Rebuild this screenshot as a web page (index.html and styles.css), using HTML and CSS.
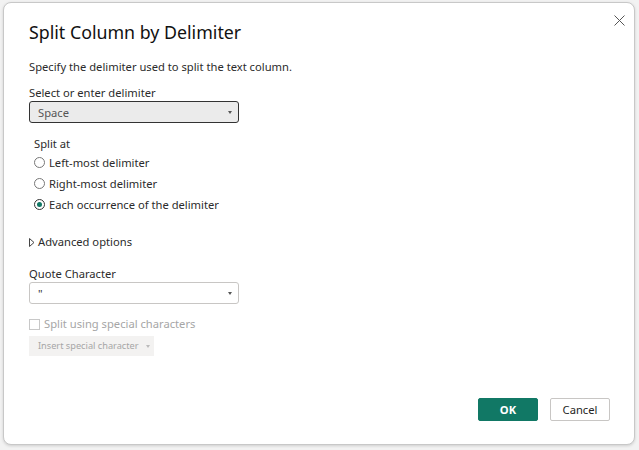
FILE: index.html
```html
<!DOCTYPE html>
<html lang="en">
<head>
    <meta charset="UTF-8">
    <title>Split Column by Delimiter</title>
    <link rel="stylesheet" href="styles.css">
</head>
<body>
    <div class="dialog">
        <button class="close" aria-label="Close">
            <svg width="11" height="11" viewBox="0 0 11 11"><path d="M0.5 0.5 L10.5 10.5 M10.5 0.5 L0.5 10.5" stroke="#555" stroke-width="1"/></svg>
        </button>
        <h1>Split Column by Delimiter</h1>
        <p class="desc">Specify the delimiter used to split the text column.</p>

        <div class="field">
            <label>Select or enter delimiter</label>
            <div class="select active">
                <span>Space</span>
                <span class="caret"></span>
            </div>
        </div>

        <div class="group">
            <div class="group-title">Split at</div>
            <label class="radio"><span class="dot"></span>Left-most delimiter</label>
            <label class="radio"><span class="dot"></span>Right-most delimiter</label>
            <label class="radio"><span class="dot checked"></span>Each occurrence of the delimiter</label>
        </div>

        <div class="advanced">
            <svg width="6" height="9" viewBox="0 0 6 9"><path d="M0.5 0.5 L5 4.5 L0.5 8.5 Z" fill="none" stroke="#444" stroke-width="1"/></svg>
            <span>Advanced options</span>
        </div>

        <div class="field">
            <label>Quote Character</label>
            <div class="select">
                <span>"</span>
                <span class="caret"></span>
            </div>
        </div>

        <label class="check"><span class="box"></span>Split using special characters</label>
        <div class="insert">Insert special character <span class="caret light"></span></div>

        <div class="footer">
            <button class="btn primary">OK</button>
            <button class="btn">Cancel</button>
        </div>
    </div>
</body>
</html>
```

FILE: styles.css
```css
body {
    margin: 0;
    padding: 2px 4px 3px 3px;
    background-color: #f2f2f2;
    font-family: "Segoe UI", "Noto Sans", Arial, sans-serif;
    color: #252423;
}
.dialog {
    position: relative;
    height: 443px;
    background-color: #fff;
    border: 1px solid #c8c8c8;
    border-radius: 8px;
    box-shadow: 0 1px 3px rgba(0,0,0,0.15);
    padding: 0 0 0 25px;
    box-sizing: border-box;
}
.close {
    position: absolute;
    top: 7px;
    right: 5px;
    width: 20px;
    height: 20px;
    border: none;
    background: none;
    padding: 0;
    display: flex;
    align-items: center;
    justify-content: center;
}
h1 {
    margin: 0;
    padding-top: 17px;
    font-size: 17.8px;
    font-weight: 400;
    line-height: 24px;
    color: #111;
}
.desc {
    margin: 15px 0 0 0;
    font-size: 11.2px;
    line-height: 16px;
    color: #2b2b2b;
}
.field {
    margin-top: 10px;
}
.field + .group {
    margin-top: 13px;
}
.field label {
    display: block;
    font-size: 11.2px;
    line-height: 16px;
    color: #2b2b2b;
}
.select {
    width: 210px;
    height: 22px;
    box-sizing: border-box;
    border: 1px solid #c8c6c4;
    border-radius: 3px;
    display: flex;
    align-items: center;
    justify-content: space-between;
    padding: 0 8px;
    font-size: 11.2px;
    color: #333;
}
.select.active {
    background-color: #ebebeb;
    border-color: #333;
    color: #555;
}
.caret {
    width: 0;
    height: 0;
    border-left: 2.5px solid transparent;
    border-right: 2.5px solid transparent;
    border-top: 3px solid #555;
    margin-right: -2px;
}
.caret.light {
    border-top-color: #bbb;
    margin: 0 0 0 5px;
    display: inline-block;
    vertical-align: middle;
}
.group {
    padding-left: 5px;
}
.group-title {
    font-size: 11.2px;
    line-height: 16px;
    color: #2b2b2b;
}
.radio {
    display: flex;
    align-items: center;
    font-size: 11.2px;
    line-height: 16px;
    height: 21px;
    color: #2b2b2b;
}
.dot {
    width: 11px;
    height: 11px;
    box-sizing: border-box;
    border: 1px solid #777;
    border-radius: 50%;
    margin-right: 4px;
    display: flex;
    align-items: center;
    justify-content: center;
}
.dot.checked {
    border-color: #333;
}
.dot.checked::after {
    content: "";
    width: 5px;
    height: 5px;
    border-radius: 50%;
    background-color: #117865;
}
.advanced {
    margin-top: 19px;
    display: flex;
    align-items: center;
    gap: 3px;
    font-size: 11.2px;
    line-height: 16px;
    color: #2b2b2b;
}
.advanced + .field {
    margin-top: 16px;
}
.check {
    margin-top: 12px;
    display: flex;
    align-items: center;
    font-size: 11.2px;
    line-height: 16px;
    color: #a6a6a6;
}
.box {
    width: 11px;
    height: 11px;
    box-sizing: border-box;
    border: 1px solid #c8c8c8;
    margin-right: 4px;
}
.insert {
    margin-top: 4px;
    width: 125px;
    height: 20px;
    box-sizing: border-box;
    background-color: #f3f2f1;
    font-size: 9.2px;
    line-height: 20px;
    white-space: nowrap;
    color: #a6a6a6;
    padding-left: 9px;
}
.footer {
    position: absolute;
    right: 24px;
    bottom: 23px;
    display: flex;
    gap: 12px;
}
.btn {
    width: 60px;
    height: 23px;
    box-sizing: border-box;
    border: 1px solid #c8c6c4;
    border-radius: 2px;
    background-color: #fff;
    font-family: "Segoe UI", "Noto Sans", Arial, sans-serif;
    font-size: 11.2px;
    color: #252423;
    padding: 0;
}
.btn.primary {
    background-color: #117865;
    border-color: #117865;
    color: #fff;
    font-weight: 700;
}
```
